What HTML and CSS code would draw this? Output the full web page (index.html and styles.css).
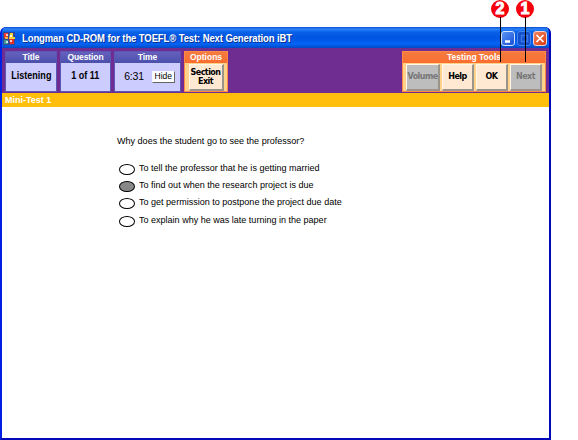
FILE: index.html
```
<!DOCTYPE html>
<html lang="en">
<head>
<meta charset="utf-8">
<title>Longman CD-ROM for the TOEFL® Test</title>
<link rel="stylesheet" href="styles.css">
</head>
<body>
<div class="window">
  <header class="titlebar">
    <svg class="logo" width="12" height="13" viewBox="0 0 12 13">
      <rect width="12" height="13" fill="#30489a"/>
      <path d="M1 1h4v5H1z" fill="#ed3b28"/><path d="M7 1h3v4h2v2H6z" fill="#f4d43c"/>
      <path d="M1 8h4v4H1z" fill="#459a8c"/><path d="M6 7h5v5H7z" fill="#e83424"/>
      <path d="M3 2h2v2H3zM7 3h2v2H7zM3 9h2v2H3zM7 8h2v2H7z" fill="#fff" opacity=".75"/>
      <path d="M2 5h3v2H2z" fill="#ffb23b"/>
    </svg>
    <h1 class="caption">Longman CD-ROM for the TOEFL® Test: Next Generation iBT</h1>
    <div class="controls">
      <span class="control"><svg width="14" height="14"><path d="M3 9.5h5" stroke="#fff" stroke-width="2.4"/></svg></span>
      <span class="control dim"><svg width="14" height="14"><path d="M3.5 3.5h6v6h-6z" fill="none" stroke="#3978e8" stroke-width="1.4"/></svg></span>
      <span class="control close"><svg width="14" height="14"><path d="M2.5 3l7 7M9.5 3l-7 7" stroke="#fff" stroke-width="1.7"/></svg></span>
    </div>
  </header>
  <div class="toolbar">
    <section class="panel title-panel"><h2>Title</h2><div class="value"><span class="narrow">Listening</span></div></section>
    <section class="panel question-panel"><h2>Question</h2><div class="value"><span class="narrow">1 of 11</span></div></section>
    <section class="panel time-panel"><h2>Time</h2><div class="value"><span class="clock">6:31</span><button class="hide">Hide</button></div></section>
    <section class="panel orange options-panel"><h2>Options</h2><div class="value"><button class="key exit">Section<br>Exit</button></div></section>
    <section class="panel orange tools-panel"><h2>Testing Tools</h2>
      <div class="value tools">
        <button class="key off">Volume</button><button class="key">Help</button><button class="key">OK</button><button class="key off next">Next</button>
      </div>
    </section>
  </div>
  <div class="strip">Mini-Test 1</div>
  <main class="content">
    <p class="question">Why does the student go to see the professor?</p>
    <ul class="answers">
      <li><i class="oval"></i><span>To tell the professor that he is getting married</span></li>
      <li><i class="oval chosen"></i><span>To find out when the research project is due</span></li>
      <li><i class="oval"></i><span>To get permission to postpone the project due date</span></li>
      <li><i class="oval"></i><span>To explain why he was late turning in the paper</span></li>
    </ul>
  </main>
</div>
<div class="callout two"><b>2</b></div>
<div class="callout one"><b>1</b></div>
</body>
</html>
```
FILE: styles.css
```
* { box-sizing: border-box; }
body { margin: 0; width: 578px; height: 440px; overflow: hidden; background: #fff; padding-top: 27px; position: relative; font-family: "Liberation Sans", Arial, sans-serif; color: #000; }
h1, h2, p, ul { margin: 0; padding: 0; }
button { font-family: inherit; padding: 0; margin: 0; }
.window { width: 551px; height: 413px; border: 2px solid #0020e4; border-top: 0; border-right-color: #0009b8; border-bottom-color: #0009b8; border-radius: 6px 6px 0 0; display: flex; flex-direction: column; overflow: hidden; background: #0058e6; }
.titlebar { height: 21px; flex: none; display: flex; align-items: center; padding: 1px 2px 0 1px; background: linear-gradient(#0a4bd0 0, #2b84f8 2px, #0860e8 5px, #0054e0 11px, #0364f6 17px, #0348c4 21px); }
.logo { flex: none; }
.caption { margin-left: 7px; color: #fff; font-size: 10.5px; line-height: 14px; font-weight: bold; letter-spacing: -0.1px; white-space: nowrap; text-shadow: 1px 1px 0 #083294; transform: scaleX(.902); transform-origin: left; }
.controls { margin-left: auto; display: flex; gap: 2px; }
.control { width: 14px; height: 15px; border: 1px solid #d3e2fb; border-radius: 3px; background: linear-gradient(135deg, #5a94f6, #1750d4); overflow: hidden; }
.control svg { display: block; }
.dim { border-color: #4383ec; background: #1450cb; }
.close { border-color: #f7d2c7; background: linear-gradient(135deg, #f08560, #da3a10); }
.toolbar { height: 45px; flex: none; background: #702d91; display: flex; align-items: flex-start; padding: 3px 3px 0; }
.panel { height: 41px; border: 1px solid #5b55b5; display: flex; flex-direction: column; flex: none; }
.panel h2 { height: 11px; flex: none; color: #fff; background: linear-gradient(#6561bd, #4b50ab); text-align: center; font-size: 8.5px; line-height: 10px; font-weight: bold; white-space: nowrap; letter-spacing: -.1px; }
.value { flex: 1; background: #ccccff; display: flex; align-items: center; justify-content: center; font-weight: bold; white-space: nowrap; }
.narrow { font-size: 10.5px; line-height: 12px; margin: -4px -4px 0; transform: scaleX(.86); }
.title-panel { width: 52px; margin-right: 3px; }
.question-panel { width: 51px; margin-right: 3px; }
.time-panel { width: 67px; margin-right: 3px; }
.options-panel { width: 44px; }
.tools-panel { width: 144px; margin-left: auto; }
.clock { font-weight: normal; font-size: 10.5px; margin: -2px 8px 0 4px; letter-spacing: -.2px; }
.hide { width: 23px; height: 12px; margin-bottom: 1px; font-size: 8.5px; line-height: 9px; background: #fff; border: 1px solid #f8f8ff; border-right-color: #666; border-bottom-color: #666; }
.orange { border-color: #ff8a45; }
.panel.orange h2 { background: linear-gradient(#f47c40, #fb6d2f); letter-spacing: 0; }
.orange .value { background: #ffd28c; }
.key { width: 32px; height: 27px; font-family: "DejaVu Sans", sans-serif; font-weight: bold; font-size: 8px; line-height: 9px; color: #000; background: #ffe9d2; border: 1px solid #fff8e9; border-width: 1px 2px 2px 1px; border-right-color: #9b948b; border-bottom-color: #9b948b; letter-spacing: -0.55px; }
.exit { width: 35px; }
.tools { gap: 2px; }
.off { background: #bdbdbd; color: #777; width: 34px; }
.next { width: 32px; }
.strip { height: 14px; flex: none; background: #ffbd0c; color: #fff; font-size: 9px; line-height: 14px; font-weight: bold; padding-left: 3px; letter-spacing: 0; }
.content { flex: 1; background: #fff; padding: 27px 0 0 115px; font-size: 9.5px; white-space: nowrap; }
.question { line-height: 13px; transform: scaleX(.951); transform-origin: left; }
.answers { list-style: none; margin-top: 14px; }
.answers li { height: 17.2px; display: flex; align-items: flex-start; line-height: 14px; }
.answers span { transform: scaleX(.95); transform-origin: left; }
.oval { width: 16px; height: 11px; border: 1px solid #000; border-radius: 50%; margin: 3px 4px 0 2px; flex: none; }
.chosen { background: #888; }
.callout { position: absolute; top: 0; width: 18px; height: 62px; color: #fff; }
.callout::after { content: ""; position: absolute; left: 9px; top: 17px; width: 1px; height: 45px; background: #000; }
.callout b { display: block; width: 18px; height: 18px; border-radius: 50%; background: #f5000c; text-align: center; font-size: 16px; line-height: 18px; -webkit-text-stroke: 1px #fff; }
.two { left: 491px; }
.one { left: 516px; }
```
